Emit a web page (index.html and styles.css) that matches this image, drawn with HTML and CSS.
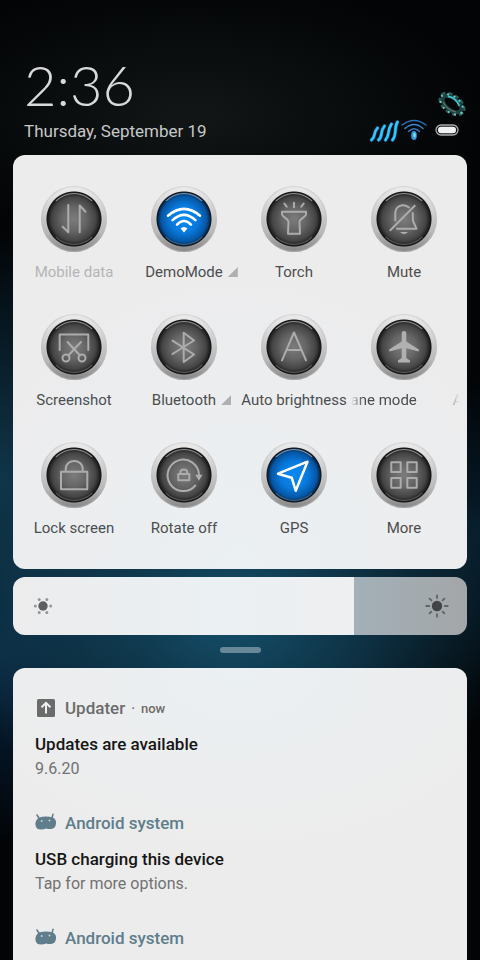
FILE: index.html
```html
<!DOCTYPE html>
<html lang="en">
<head>
<meta charset="utf-8">
<meta name="viewport" content="width=device-width, initial-scale=1">
<title>Notification shade</title>
<link rel="stylesheet" href="styles.css">
</head>
<body>
<main class="shade">
  <header class="header">
    <div class="clock">
      <time class="time">2:36</time>
      <div class="date">Thursday, September 19</div>
    </div>
    <div class="corner">
      <button class="settings" type="button" aria-label="Settings">
        <svg width="30" height="30" viewBox="0 0 30 30" fill="none">
          <g transform="rotate(38 15 15)">
            <ellipse cx="15" cy="15" rx="13" ry="7.500" stroke="#2a5c5c" stroke-width="4.500" stroke-dasharray="4 2.600"/>
            <ellipse cx="15" cy="15" rx="11" ry="6" stroke="#1d4143" stroke-width="4"/>
            <ellipse cx="15" cy="15.500" rx="13" ry="8" stroke="#6fc4bd" stroke-width="2" stroke-dasharray="2 4.600"/>
            <path d="M7 11.500q7-4 15 .5" stroke="#3cc4c6" stroke-width="1.800"/>
            <path d="M7 19q8 4 16 0" stroke="#6b7a66" stroke-width="1"/>
          </g>
        </svg>
      </button>
      <div class="status">
        <svg width="30" height="24" viewBox="0 0 30 24" fill="none" stroke-linecap="round">
          <g stroke="#0a5f9c" stroke-width="3.600">
            <path d="M2.500 21Q5 19 5.500 15.500T8.500 9"/><path d="M9.500 21Q12 19 12.500 14.500T15.500 7"/><path d="M16.500 21Q19 18 19.500 13.500T22.500 5"/><path d="M23.500 21Q26 18 26.300 12T28.500 3"/>
          </g>
          <g stroke="#35c8fb" stroke-width="2.400">
            <path d="M2.500 21Q5 19 5.500 15.500T8.500 9"/><path d="M9.500 21Q12 19 12.500 14.500T15.500 7"/><path d="M16.500 21Q19 18 19.500 13.500T22.500 5"/><path d="M23.500 21Q26 18 26.300 12T28.500 3"/>
          </g>
        </svg>
        <svg width="26" height="24" viewBox="0 0 26 24" fill="none" stroke-linecap="round">
          <path d="M1 6Q13-3 25 6" stroke="#2a6db8" stroke-width="1.500"/>
          <path d="M4 9.500Q13 1.500 22 9.500" stroke="#3a86d0" stroke-width="1.500"/>
          <path d="M7.500 12.500Q13 7 18.500 12.500" stroke="#2c79c4" stroke-width="1.400"/>
          <ellipse cx="13" cy="16.500" rx="2.800" ry="4.500" fill="#2b9be8"/>
          <ellipse cx="13.500" cy="16" rx="1.200" ry="2.500" fill="#7fe0ff"/>
        </svg>
        <svg class="battery" width="24" height="24" viewBox="0 0 24 24">
          <rect x="1" y="6" width="22" height="10" rx="5" fill="#16181a" stroke="#a9abac" stroke-width="1.300"/>
          <rect x="3" y="7.800" width="18" height="6.400" rx="3.200" fill="#f2f2f2"/>
        </svg>
      </div>
    </div>
  </header>

  <section class="card tiles" aria-label="Quick settings">
    <button class="tile disabled" type="button">
      <span class="knob"><svg viewBox="0 0 66 66"><path d="M27.300 19v27.300l-5.600-5.600M38.700 46.300V19.500l5.800 6.200"/></svg></span>
      <span class="label"><span class="name">Mobile data</span></span>
    </button>
    <button class="tile on" type="button">
      <span class="knob"><svg viewBox="0 0 66 66"><path d="M17 29.700Q33 16 49 29.700M21.500 34.200Q33 23.500 44.500 34.200M26 38.700Q33 31.500 40 38.700"/><path class="solid" d="M29.500 42.500q3.500-3 7 0L33 46.500z"/></svg></span>
      <span class="label"><span class="name">DemoMode</span><i class="more"></i></span>
    </button>
    <button class="tile" type="button">
      <span class="knob"><svg viewBox="0 0 66 66"><path d="M23.300 17.500l2.400 3.200M33 16.700v4.600M42.700 17.500l-2.400 3.200M21 25.700h24v2.500c0 3-6.500 4-6.500 8l.5 11.500H27l.5-11.500c0-4-6.500-5-6.500-8z"/></svg></span>
      <span class="label"><span class="name">Torch</span></span>
    </button>
    <button class="tile" type="button">
      <span class="knob"><svg viewBox="0 0 66 66"><path d="M43.700 19.700L19.300 44.300M24.300 34.500V28c0-9 8-10.500 13.700-6.500M41.700 27l.3 8 3.500 7.700H26"/><path class="solid" d="M29 46h8q-4 4-8 0z"/></svg></span>
      <span class="label"><span class="name">Mute</span></span>
    </button>

    <button class="tile" type="button">
      <span class="knob"><svg viewBox="0 0 66 66"><path d="M18.700 36V20.500h28.600V36M26.500 28l12.300 13.200M40 28L27.500 41.200"/><circle cx="25" cy="44" r="3.500"/><circle cx="41" cy="44" r="3.500"/></svg></span>
      <span class="label"><span class="name">Screenshot</span></span>
    </button>
    <button class="tile" type="button">
      <span class="knob"><svg viewBox="0 0 66 66"><path d="M21.500 26.700L43 40.500 32.700 48V18.700L43 26.500 21.500 40"/></svg></span>
      <span class="label"><span class="name">Bluetooth</span><i class="more"></i></span>
    </button>
    <button class="tile" type="button">
      <span class="knob"><svg viewBox="0 0 66 66"><path d="M21 46.300l12-27.800 12 27.800M25.500 36h15"/></svg></span>
      <span class="label"><span class="name">Auto brightness</span></span>
    </button>
    <button class="tile" type="button">
      <span class="knob"><svg viewBox="0 0 66 66"><path class="solid" d="M30.700 19q0-2 2.300-2t2.300 2v8.500l12.200 7.800q1 1.200 0 2.200l-12.200-3.200V44l3.700 2.500v2H27v-2l3.700-2.500v-9.700l-12.200 3.200q-1-1 0-2.200l12.200-7.800z"/></svg></span>
      <span class="marquee"><span class="track"><span>Airplane mode</span><span aria-hidden="true">Airplane mode</span></span></span>
    </button>

    <button class="tile" type="button">
      <span class="knob"><svg viewBox="0 0 66 66"><path d="M20 29.700h26.300v17.600H20zM24.700 29.700v-2.500c0-11 17-11 17 0v2.500"/></svg></span>
      <span class="label"><span class="name">Lock screen</span></span>
    </button>
    <button class="tile" type="button">
      <span class="knob"><svg viewBox="0 0 66 66"><path d="M44.300 43.500A15.700 15.700 0 1 1 48 33M27.300 32h11v6.300h-11zM29.300 32v-1.500c0-4 7-4 7 0V32"/><path class="solid" d="M44.300 32.700h7.200l-3.600 6z"/></svg></span>
      <span class="label"><span class="name">Rotate off</span></span>
    </button>
    <button class="tile on" type="button">
      <span class="knob"><svg viewBox="0 0 66 66"><path d="M46.500 19.700L17 31.700l13.700 4 4 13z"/></svg></span>
      <span class="label"><span class="name">GPS</span></span>
    </button>
    <button class="tile" type="button">
      <span class="knob"><svg viewBox="0 0 66 66"><path d="M20.300 20.300h9.400v9.700h-9.400zM36.300 20.300h9.400v9.700h-9.400zM20.300 36h9.400v9.700h-9.400zM36.300 36h9.400v9.700h-9.400z"/></svg></span>
      <span class="label"><span class="name">More</span></span>
    </button>
  </section>

  <div class="brightness">
    <input class="slider" type="range" min="0" max="100" value="75" aria-label="Brightness">
    <svg class="sun low" width="20" height="20" viewBox="0 0 20 20" fill="#949596">
      <circle cx="10" cy="10" r="4.700" fill="#5e5f60"/>
      <circle cx="2.300" cy="10" r="1.500"/><circle cx="17.700" cy="10" r="1.500"/><circle cx="6.200" cy="3.400" r="1.500"/><circle cx="13.800" cy="3.400" r="1.500"/><circle cx="6.200" cy="16.600" r="1.500"/><circle cx="13.800" cy="16.600" r="1.500"/>
    </svg>
    <svg class="sun high" width="24" height="24" viewBox="0 0 24 24" fill="none" stroke="#606465" stroke-width="1.800" stroke-linecap="round">
      <circle cx="12" cy="12" r="5.200" fill="#434445" stroke="none"/>
      <path d="M12 1.300v2.600M12 20.100v2.600M1.300 12h2.900M19.800 12h2.900M4.600 4.600l1.800 1.800M17.600 17.600l1.800 1.800M4.600 19.400l1.800-1.800M17.600 6.400l1.800-1.800"/>
    </svg>
  </div>

  <div class="handle"></div>

  <section class="card notifications" aria-label="Notifications">
    <article class="note">
      <div class="app">
        <svg width="22" height="20" viewBox="0 0 22 20"><rect x="2" y="1" width="18" height="18" rx="1.500" fill="#6b6b6b"/><path d="M11 15.500V5M6.500 9.300L11 4.800l4.500 4.500" fill="none" stroke="#f0f0f0" stroke-width="2"/></svg>
        <span>Updater</span><span class="when">·</span><span class="when">now</span>
      </div>
      <h2 class="title">Updates are available</h2>
      <p class="text">9.6.20</p>
    </article>
    <article class="note">
      <div class="app system">
        <svg width="22" height="20" viewBox="0 0 22 20"><path d="M4.500 6L2 2M17 5l1-3.800" stroke="#607d8b" stroke-width="1.500" stroke-linecap="round"/><path d="M4 4.500q7-2 14 0 3.500 2 3 6-.5 5-5 5.500-3 0-5-.5-2 1-5 1-5 0-5.500-4.500Q0 7 4 4.500z" fill="#607d8b"/><circle cx="6.700" cy="8" r="1" fill="#c4d0d6"/><circle cx="14.500" cy="7.500" r="1" fill="#c4d0d6"/></svg>
        <span>Android system</span>
      </div>
      <h2 class="title">USB charging this device</h2>
      <p class="text">Tap for more options.</p>
    </article>
    <article class="note">
      <div class="app system">
        <svg width="22" height="20" viewBox="0 0 22 20"><path d="M4.500 6L2 2M17 5l1-3.800" stroke="#607d8b" stroke-width="1.500" stroke-linecap="round"/><path d="M4 4.500q7-2 14 0 3.500 2 3 6-.5 5-5 5.500-3 0-5-.5-2 1-5 1-5 0-5.500-4.500Q0 7 4 4.500z" fill="#607d8b"/><circle cx="6.700" cy="8" r="1" fill="#c4d0d6"/><circle cx="14.500" cy="7.500" r="1" fill="#c4d0d6"/></svg>
        <span>Android system</span>
      </div>
    </article>
  </section>
</main>
</body>
</html>
```
FILE: styles.css
```css
* {
  box-sizing: border-box;
}

body {
  margin: 0;
  font-family: Roboto, "Liberation Sans", sans-serif;
  background:
    radial-gradient(ellipse 60% 22% at 48% 64%, #15506c 0%, rgba(18, 66, 90, 0.7) 50%, rgba(8, 30, 45, 0) 100%),
    radial-gradient(ellipse 40% 26% at 0% 50%, #10364a 0%, rgba(6, 20, 34, 0) 100%),
    radial-gradient(ellipse 30% 20% at 0% 68%, #08223c 0%, rgba(4, 14, 28, 0) 100%),
    radial-gradient(ellipse 30% 16% at 100% 55%, #081c2a 0%, rgba(4, 12, 18, 0) 100%),
    radial-gradient(ellipse 60% 14% at 40% 12%, #121616 0%, rgba(6, 8, 10, 0) 100%),
    #020406;
}

button {
  padding: 0;
  border: 0;
  background: none;
  color: inherit;
  font: inherit;
}

svg {
  display: block;
}

.shade {
  display: flex;
  flex-direction: column;
  min-height: 100vh;
  padding: 55px 13px 0;
}

.header {
  display: flex;
  justify-content: space-between;
  align-items: flex-end;
  padding: 0 0 12px 11px;
}

.time {
  display: block;
  color: #d8d9d9;
  font-family: Lato, Roboto, sans-serif;
  font-weight: 300;
  font-size: 56px;
  line-height: 60px;
}

.date {
  margin-top: 4px;
  color: #c6c8c8;
  font-size: 17px;
  line-height: 24px;
}

.corner {
  display: flex;
  flex-direction: column;
  align-items: flex-end;
}

.status {
  display: flex;
  gap: 2px;
  padding-right: 8px;
}

.battery {
  margin-left: 6px;
}

.card {
  border-radius: 12px;
  background: radial-gradient(ellipse 60% 70% at 50% 100%, #ebf0f3 0%, #ececed 100%);
}

.tiles {
  display: grid;
  grid-template-columns: repeat(4, 1fr);
  row-gap: 28px;
  padding: 31px 8px 27px 6px;
}

.tile {
  display: flex;
  flex-direction: column;
  align-items: center;
  gap: 8px;
  min-width: 0;
  height: 100px;
  color: #4c4d4e;
  font-size: 15px;
  line-height: 24px;
}

.disabled {
  color: #b4b5b6;
}

.knob {
  position: relative;
  width: 66px;
  height: 66px;
  border-radius: 50%;
  background: linear-gradient(#ededed 0%, #d2d2d2 35%, #b8b8b8 70%, #858585 100%);
  box-shadow: inset 0 0 1px 1px rgba(190, 190, 190, 0.6);
}

.knob::after {
  content: "";
  position: absolute;
  inset: 7px;
  border: 1px solid transparent;
  border-top-color: rgba(210, 215, 220, 0.6);
  border-bottom-color: rgba(190, 195, 200, 0.35);
  border-radius: 50%;
}

.knob svg {
  width: 66px;
  height: 66px;
  fill: none;
  stroke: #acacac;
  stroke-width: 2;
  stroke-linecap: round;
  stroke-linejoin: round;
  background: radial-gradient(circle at 50% 50%, #7c7c7c 0, #666666 12px, #444444 22px, #1e1e1e 26px, #151515 27px, rgba(20, 20, 20, 0) 28px);
}

.on .knob svg {
  stroke: #ffffff;
  background: radial-gradient(circle at 50% 50%, #0a8af4 0, #0879dc 14px, #0555a2 23px, #06294e 26px, #10151c 27px, rgba(20, 20, 20, 0) 28px);
  stroke-width: 2.5;
}

.knob .solid {
  fill: #b0b0b0;
  stroke: none;
}

.on .knob .solid {
  fill: #ffffff;
}

.label {
  display: grid;
  grid-template-columns: 1fr auto 1fr;
  width: 100%;
  white-space: nowrap;
}

.name {
  grid-column: 2;
}

.more {
  align-self: center;
  width: 10px;
  height: 10px;
  margin-left: 5px;
  background: #aeb0b1;
  clip-path: polygon(100% 0, 100% 100%, 0 100%);
}

.marquee {
  display: block;
  width: 100%;
  overflow: hidden;
  white-space: nowrap;
  mask-image: linear-gradient(90deg, transparent 2px, #000 14px, #000 96px, transparent);
}

.track {
  display: flex;
  gap: 36px;
  transform: translateX(-29px);
}

.brightness {
  position: relative;
  margin-top: 8px;
}

.slider {
  display: block;
  appearance: none;
  width: 100%;
  height: 58px;
  margin: 0;
  border-radius: 12px;
  background: linear-gradient(90deg, #ececed 0%, #ebf0f3 45%, #eeeff0 75%, #a3b0b8 75%, #a3a6a8 100%);
}

.slider::-webkit-slider-thumb {
  appearance: none;
  width: 1px;
  height: 58px;
}

.sun {
  position: absolute;
  top: 50%;
  transform: translateY(-50%);
  pointer-events: none;
}

.low {
  left: 20px;
}

.high {
  right: 18px;
}

.handle {
  align-self: center;
  width: 41px;
  height: 6px;
  margin: 12px 0 15px;
  border-radius: 3px;
  background: #688799;
}

.notifications {
  display: flex;
  flex: 1;
  flex-direction: column;
  gap: 29px;
  padding: 28px 22px 0;
  border-radius: 12px 12px 0 0;
  background: radial-gradient(ellipse 60% 60% at 50% 0%, #ebf0f3 0%, #ececec 100%);
}

.app {
  display: flex;
  align-items: center;
  gap: 8px;
  height: 24px;
  margin-bottom: 12px;
  color: #6b6b6b;
  font-weight: 500;
  font-size: 17px;
}

.system {
  color: #607d8b;
}

.when {
  margin-left: -2px;
  font-size: 13px;
}

.title,
.text {
  margin: 0;
}

.title {
  color: #161616;
  font-weight: 500;
  font-size: 17px;
  line-height: 24px;
}

.text {
  color: #717273;
  font-weight: 400;
  font-size: 16px;
  line-height: 26px;
}
```
